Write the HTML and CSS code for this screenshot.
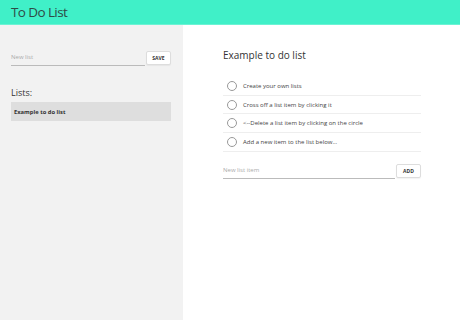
FILE: index.html
```html
<!DOCTYPE html>
<html>
<head>
<meta charset="utf-8">
<link rel="stylesheet" href="styles.css">
</head>
<body>
<header class="topbar"><h1 class="title">To Do List</h1></header>
<div class="layout">
  <aside class="sidebar">
    <form class="entry">
      <input class="field" type="text" placeholder="New list">
      <button class="btn" type="button">SAVE</button>
    </form>
    <h2 class="lists-label">Lists:</h2>
    <div class="list-link">Example to do list</div>
  </aside>
  <main class="content">
    <h2 class="list-title">Example to do list</h2>
    <ul class="items">
      <li class="item"><span class="circle"></span>Create your own lists</li>
      <li class="item"><span class="circle"></span>Cross off a list item by clicking it</li>
      <li class="item"><span class="circle"></span>&lt;--Delete a list item by clicking on the circle</li>
      <li class="item"><span class="circle"></span>Add a new item to the list below...</li>
    </ul>
    <form class="entry entry-main">
      <input class="field" type="text" placeholder="New list item">
      <button class="btn" type="button">ADD</button>
    </form>
  </main>
</div>
</body>
</html>
```
FILE: styles.css
```css
* { box-sizing: border-box; }
html, body { margin: 0; padding: 0; height: 100%; }
body {
  font-family: "Open Sans", "Liberation Sans", sans-serif;
  color: #333;
  display: flex;
  flex-direction: column;
  background: #fff;
}
.topbar {
  height: 25px;
  background: #40f0c8;
  border-bottom: 1px solid #6cf3d4;
  display: flex;
  align-items: center;
  padding-left: 11px;
  flex-shrink: 0;
}
.title {
  margin: 0;
  font-size: 13.5px;
  font-weight: 400;
  letter-spacing: -0.6px;
  color: #2f4a46;
}
.layout {
  flex: 1;
  display: flex;
}
.sidebar {
  width: 183px;
  background: #f2f2f2;
  padding: 26px 12px 0 11px;
}
.content {
  flex: 1;
  padding: 23px 39px 0 40px;
}
.entry {
  display: flex;
  align-items: flex-end;
  gap: 1px;
  margin: 0;
}
.field {
  flex: 1;
  border: none;
  border-bottom: 1px solid #bbb;
  background: transparent;
  font-family: inherit;
  font-size: 6px;
  padding: 0 0 3px 0;
  height: 14px;
  outline: none;
  color: #333;
}
.field::placeholder { color: #aaa; }
.btn {
  width: 25px;
  height: 14px;
  border: 1px solid #ddd;
  border-radius: 2px;
  background: #fff;
  font-family: inherit;
  font-size: 5px;
  font-weight: 700;
  color: #333;
  padding: 0;
  box-shadow: 0 1px 1px rgba(0,0,0,0.05);
  margin-bottom: 1px;
}
.lists-label {
  margin: 20px 0 0 0;
  font-size: 9px;
  font-weight: 400;
  color: #333;
}
.list-link {
  margin-top: 3px;
  background: #dedede;
  height: 19px;
  display: flex;
  align-items: center;
  padding-left: 3px;
  font-size: 5.8px;
  font-weight: 700;
}
.list-title {
  margin: 0;
  font-size: 10px;
  font-weight: 400;
  color: #333;
}
.items {
  list-style: none;
  margin: 15px 0 0 0;
  padding: 0;
}
.item {
  height: 18.7px;
  display: flex;
  align-items: center;
  font-size: 6px;
  color: #444;
  border-bottom: 1px solid #eee;
  padding-left: 4px;
}
.circle {
  width: 10px;
  height: 10px;
  border: 1px solid #999;
  border-radius: 50%;
  margin-right: 6px;
  flex-shrink: 0;
}
.entry-main { margin-top: 12px; }
```
